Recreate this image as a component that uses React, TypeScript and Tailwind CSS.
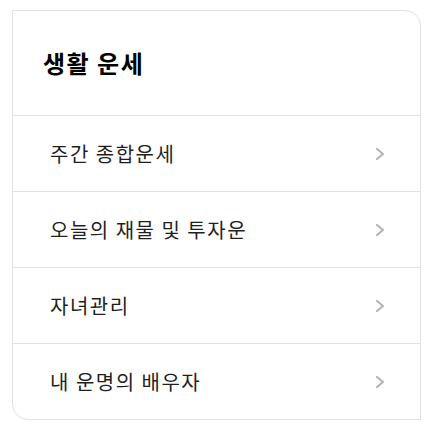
import React from 'react';

const items = ['주간 종합운세', '오늘의 재물 및 투자운', '자녀관리', '내 운명의 배우자'];

function Chevron() {
  return (
    <svg width="10" height="14" viewBox="0 0 10 14" fill="none" className="text-[#b3b3b3] shrink-0">
      <polyline points="2,2 8,7 2,12" stroke="currentColor" strokeWidth="2.2" strokeLinecap="round" strokeLinejoin="round" />
    </svg>
  );
}

export default function App() {
  return (
    <div className="w-[428px] h-[425px] bg-white pt-[10px] pl-[12px] font-['Noto_Sans_CJK_KR','Noto_Sans',sans-serif]">
      <div className="w-[409px] h-[410px] border border-[#e2e2e2] rounded-tr-[16px] rounded-bl-[16px] overflow-hidden flex flex-col">
        {/* header */}
        <div className="h-[105px] flex items-center pl-[30px] border-b border-[#e2e2e2] shrink-0">
          <h2 className="text-[24px] font-bold text-black leading-none tracking-[1.5px]">생활 운세</h2>
        </div>
        {items.map((label, i) => (
          <div
            key={label}
            className={
              i < items.length - 1
                ? 'h-[76px] shrink-0 flex items-center justify-between pl-[37px] pr-[35px] border-b border-[#e2e2e2]'
                : 'flex-1 flex items-center justify-between pl-[37px] pr-[35px]'
            }
          >
            <span className="text-[20px] text-[#1f1f1f] leading-none tracking-[1.5px]">{label}</span>
            <Chevron />
          </div>
        ))}
      </div>
    </div>
  );
}
